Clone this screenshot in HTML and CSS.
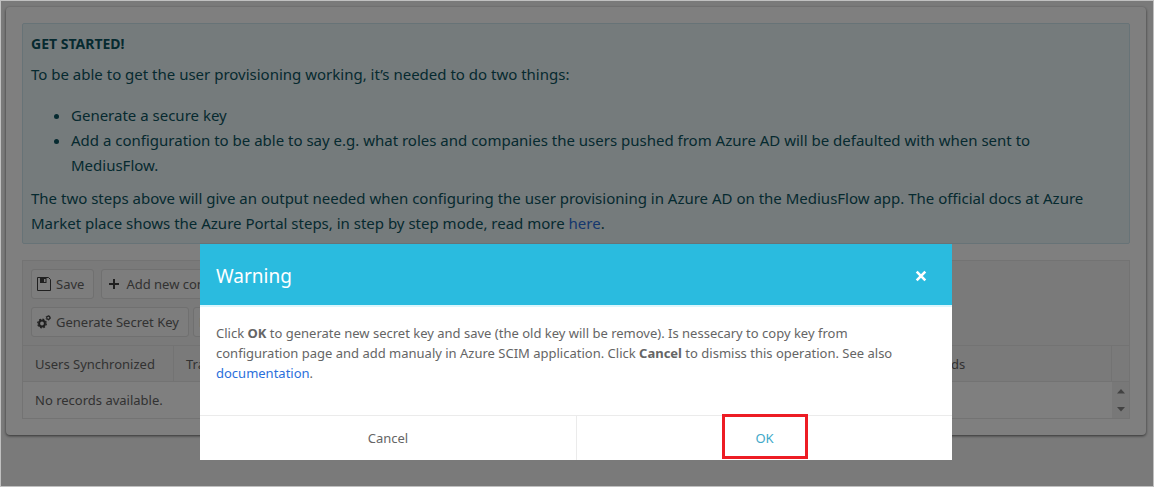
FILE: index.html
```html
<!DOCTYPE html>
<html lang="en">
<head>
<meta charset="utf-8">
<title>User provisioning</title>
<link rel="stylesheet" href="styles.css">
</head>
<body>
<main class="page">
  <section class="card">
    <div class="notice">
      <h1 class="notice-title">GET STARTED!</h1>
      <p>To be able to get the user provisioning working, it’s needed to do two things:</p>
      <ul class="notice-list">
        <li>Generate a secure key</li>
        <li>Add a configuration to be able to say e.g. what roles and companies the users pushed from Azure AD will be defaulted with when sent to MediusFlow.</li>
      </ul>
      <p>The two steps above will give an output needed when configuring the user provisioning in Azure AD on the MediusFlow app. The official docs at Azure Market place shows the Azure Portal steps, in step by step mode, read more <a class="link" href="#">here</a>.</p>
    </div>

    <div class="grid">
      <div class="toolbar">
        <div class="tool-row">
          <button class="tool" type="button">
            <svg class="icon" viewBox="0 0 14 14" aria-hidden="true"><path d="M.5.5h11l2 2v11H.5z" fill="none" stroke="currentColor"/><path d="M3 1h6.500v5H3z" fill="currentColor"/><path d="M7 2h1.500v3H7z" fill="#fafafa"/></svg>
            Save
          </button>
          <button class="tool" type="button">
            <svg class="icon" viewBox="0 0 14 14" aria-hidden="true"><path d="M7 2v10M2 7h10" stroke="currentColor" stroke-width="2"/></svg>
            Add new configuration
          </button>
        </div>
        <div class="tool-row tool-row-tight">
          <button class="tool" type="button">
            <svg class="icon" viewBox="0 0 14 14" aria-hidden="true"><g fill="none" stroke="currentColor"><circle cx="5" cy="8.500" r="2.900" stroke-width="2"/><circle cx="5" cy="8.500" r="4.300" stroke-width="1.300" stroke-dasharray="1.800 1.577"/><circle cx="11.300" cy="2.800" r="1.600" stroke-width="1.200"/><circle cx="11.300" cy="2.800" r="2.400" stroke-width=".7" stroke-dasharray="1.200 1.313"/></g></svg>
            Generate Secret Key
          </button>
          <button class="tool" type="button">Refresh</button>
        </div>
      </div>
      <table class="records">
        <colgroup><col class="col-users"><col><col class="col-failed"><col class="col-scroll"></colgroup>
        <thead>
          <tr><th scope="col">Users Synchronized</th><th scope="col">Transferred</th><th scope="col">Failed Records</th><td class="head-end"></td></tr>
        </thead>
        <tbody>
          <tr>
            <td colspan="3">No records available.</td>
            <td class="scroll">
              <div class="scroll-track">
                <button class="scroll-button" type="button" aria-label="Scroll up"><svg width="8" height="5" viewBox="0 0 8 5"><path d="M4 0l4 4.500H0z" fill="currentColor"/></svg></button>
                <button class="scroll-button" type="button" aria-label="Scroll down"><svg width="8" height="5" viewBox="0 0 8 5"><path d="M4 4.500L0 0h8z" fill="currentColor"/></svg></button>
              </div>
            </td>
          </tr>
        </tbody>
      </table>
    </div>
  </section>
</main>

<div class="overlay">
  <div class="dialog" role="dialog" aria-modal="true" aria-labelledby="dialog-title">
    <header class="dialog-head">
      <h2 class="dialog-title" id="dialog-title">Warning</h2>
      <button class="close" type="button" aria-label="Close"><svg width="12" height="12" viewBox="0 0 12 12"><path d="M1.700 1.700l8.600 8.600M10.300 1.700l-8.600 8.600" stroke="currentColor" stroke-width="2.600"/></svg></button>
    </header>
    <p class="dialog-body">Click <b>OK</b> to generate new secret key and save (the old key will be remove). Is nessecary to copy key from configuration page and add manualy in Azure SCIM application. Click <b>Cancel</b> to dismiss this operation. See also <a class="link" href="#">documentation</a>.</p>
    <footer class="dialog-actions">
      <button class="action" type="button">Cancel</button>
      <button class="action action-primary" type="button">OK<span class="marker"></span></button>
    </footer>
  </div>
</div>
</body>
</html>
```
FILE: styles.css
```css
* {
  box-sizing: border-box;
}

body {
  margin: 0;
  background: #f5f5f5;
  color: #656565;
  font: 13px/20px "Noto Sans", "Open Sans", sans-serif;
}

button {
  font: inherit;
  color: inherit;
  cursor: pointer;
}

.page {
  padding: 7px 8px 50px 6px;
}

.card {
  padding: 16px;
  background: #fff;
  border-radius: 4px;
  box-shadow: 0 1px 3px rgba(0, 0, 0, 0.6);
}

.notice {
  padding: 7px 32px 7px 8px;
  margin-bottom: 16px;
  border: 1px solid #cfe6ee;
  border-radius: 2px;
  background: #ebf6f9;
  color: #0c5460;
  font-size: 15px;
  line-height: 25px;
}

.notice-title {
  margin: 0 0 6px;
  font-size: 14px;
  line-height: 25px;
}

.notice p {
  margin: 0;
}

.notice-list {
  margin: 16px 0 8px;
  padding-left: 40px;
}

.link {
  color: #2a6fdb;
  text-decoration: none;
}

.grid {
  border: 1px solid #e6e6e6;
}

.toolbar {
  display: flex;
  flex-direction: column;
  gap: 8px;
  padding: 8px;
  background: #f5f5f5;
}

.tool-row {
  display: flex;
  gap: 7px;
}

.tool-row-tight {
  gap: 4px;
}

.tool {
  display: flex;
  align-items: center;
  gap: 5px;
  height: 30px;
  padding: 0 9px 0 5px;
  border: 1px solid #e0e0e0;
  border-radius: 3px;
  background: #fafafa;
}

.icon {
  width: 14px;
  height: 14px;
  color: #404040;
}

.records {
  width: 100%;
  table-layout: fixed;
  border-collapse: separate;
  border-spacing: 0;
}

.col-users {
  width: 151px;
}

.col-failed {
  width: 247px;
}

.col-scroll {
  width: 17px;
}

.records th {
  height: 37px;
  padding: 0 12px;
  border: solid #e6e6e6;
  border-width: 1px 1px 1px 0;
  background: #f5f5f5;
  font-weight: 400;
  text-align: left;
  white-space: nowrap;
}

.records td {
  height: 36px;
  padding: 0 12px;
}

.records .head-end {
  padding: 0;
  border: solid #e6e6e6;
  border-width: 1px 0;
  background: #f5f5f5;
}

.records .scroll {
  padding: 0;
  background: #f0f0f0;
}

.scroll-track {
  display: flex;
  flex-direction: column;
}

.scroll-button {
  display: flex;
  align-items: center;
  justify-content: center;
  height: 18px;
  padding: 0;
  border: 0;
  background: none;
  color: #858585;
}

.overlay {
  position: fixed;
  inset: 0;
  display: flex;
  align-items: flex-end;
  padding: 0 201px 26px 199px;
  border: 1px solid #c0c0c0;
  background: rgba(0, 0, 0, 0.5);
  background-clip: padding-box;
}

.dialog {
  flex: 1;
  background: #fff;
}

.dialog-head {
  display: flex;
  align-items: center;
  justify-content: space-between;
  padding: 17px 25px 14px 16px;
  border-bottom: 2px solid #dcf6fc;
  background: #2abbdf;
  background-clip: padding-box;
  color: #fff;
}

.dialog-title {
  margin: 0;
  font-size: 19px;
  font-weight: 400;
  line-height: 30px;
}

.close {
  display: flex;
  padding: 0;
  border: 0;
  background: none;
}

.dialog-body {
  margin: 0;
  padding: 16px 32px 32px 16px;
}

.dialog-actions {
  display: grid;
  grid-template-columns: 1fr 1fr;
  border-top: 1px solid #ebebeb;
}

.action {
  height: 44px;
  padding: 0;
  border: 0;
  background: #fff;
}

.action-primary {
  position: relative;
  border-left: 1px solid #ebebeb;
  color: #41a9c9;
}

/* Frame that points out the confirming button */
.marker {
  position: absolute;
  top: -2px;
  left: calc(50% - 43px);
  width: 86px;
  height: 45px;
  border: 3px solid #ed1c24;
}
```
